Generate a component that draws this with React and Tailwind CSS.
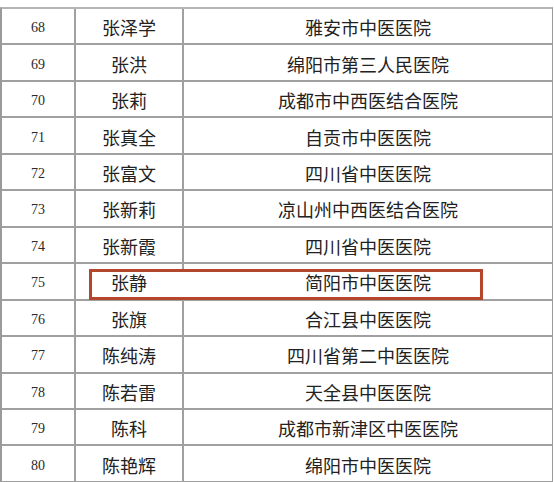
import React from "react";

const rows = [
  ["68", "张泽学", "雅安市中医医院"],
  ["69", "张洪", "绵阳市第三人民医院"],
  ["70", "张莉", "成都市中西医结合医院"],
  ["71", "张真全", "自贡市中医医院"],
  ["72", "张富文", "四川省中医医院"],
  ["73", "张新莉", "凉山州中西医结合医院"],
  ["74", "张新霞", "四川省中医医院"],
  ["75", "张静", "简阳市中医医院"],
  ["76", "张旗", "合江县中医医院"],
  ["77", "陈纯涛", "四川省第二中医医院"],
  ["78", "陈若雷", "天全县中医医院"],
  ["79", "陈科", "成都市新津区中医医院"],
  ["80", "陈艳辉", "绵阳市中医医院"],
];

export default function App() {
  return (
    <div className="w-[554px] h-[482px] bg-white pt-[7px] overflow-hidden">
      <div className="w-[553px] border-l-2 border-r border-t-2 border-[#9a9a9a] border-t-[#b5b5b5]">
        {rows.map(([n, name, org]) => (
          <div
            key={n}
            className="relative grid grid-cols-[74px_108px_1fr] h-[36.46px] border-b-2 border-[#a0a0a0]"
          >
            <div className="flex items-center justify-center pt-[3px] border-r-2 border-[#a0a0a0] text-[14px] text-[#2a2a2a] [font-family:'Liberation_Serif',serif]">
              <span className="relative z-[2]">{n}</span>
            </div>
            <div className="flex items-center justify-center pt-[3px] border-r-2 border-[#a0a0a0] text-[18px] text-[#222] [font-family:'Noto_Sans_CJK_SC',sans-serif]">
              <span className="relative z-[2]">{name}</span>
            </div>
            <div className="flex items-center justify-center pt-[3px] text-[18px] text-[#222] [font-family:'Noto_Sans_CJK_SC',sans-serif]">
              <span className="relative z-[2]">{org}</span>
            </div>
            {n === "75" && (
              <div className="absolute z-[1] left-[87px] top-[5px] w-[394px] h-[31px] bg-white border-[3px] border-[#b4462b]" />
            )}
          </div>
        ))}
      </div>
    </div>
  );
}
